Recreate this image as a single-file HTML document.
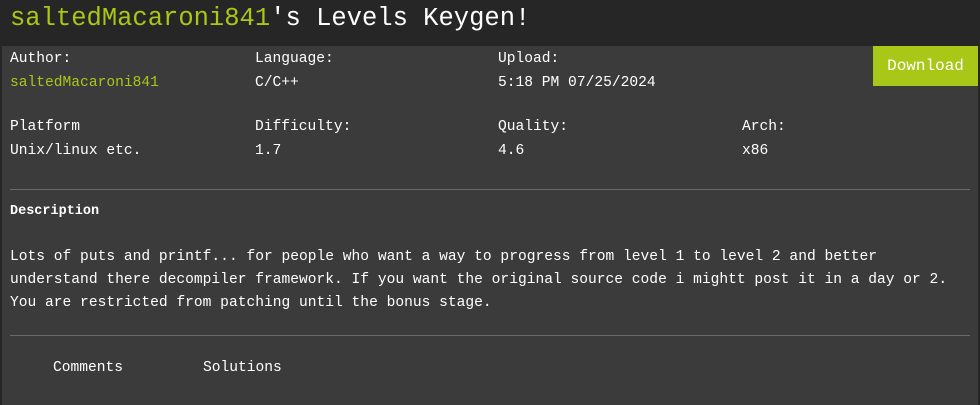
<!DOCTYPE html>
<html><head><meta charset="utf-8"><style>
html,body{margin:0;padding:0;width:980px;height:405px;overflow:hidden;background:#262626;}
body{font-family:"Liberation Mono",monospace;color:#fff;position:relative;}
.a{position:absolute;white-space:pre;font-size:14.6px;line-height:18px;}
.t{position:absolute;left:10px;top:2px;font-size:25.5px;line-height:34px;white-space:pre;}
.g{color:#a9c717;}
#panel{position:absolute;left:2px;top:46px;width:976px;height:359px;background:#3b3b3b;}
#dl{position:absolute;left:873px;top:46px;width:105px;height:40px;background:#a9c717;color:#fff;font-size:16px;line-height:40px;text-align:center;}
.hr{position:absolute;left:10px;width:960px;height:1px;background:#696969;}
</style></head><body>
<div class="t"><span class="g">saltedMacaroni841</span>'s Levels Keygen!</div>
<div id="panel"></div>
<div id="dl">Download</div>
<div class="a" style="left:10px;top:50px">Author:</div>
<div class="a g" style="left:10px;top:74px">saltedMacaroni841</div>
<div class="a" style="left:255px;top:50px">Language:</div>
<div class="a" style="left:255px;top:74px">C/C++</div>
<div class="a" style="left:498px;top:50px">Upload:</div>
<div class="a" style="left:498px;top:74px">5:18 PM 07/25/2024</div>
<div class="a" style="left:10px;top:118px">Platform</div>
<div class="a" style="left:10px;top:142px">Unix/linux etc.</div>
<div class="a" style="left:255px;top:118px">Difficulty:</div>
<div class="a" style="left:255px;top:142px">1.7</div>
<div class="a" style="left:498px;top:118px">Quality:</div>
<div class="a" style="left:498px;top:142px">4.6</div>
<div class="a" style="left:742px;top:118px">Arch:</div>
<div class="a" style="left:742px;top:142px">x86</div>
<div class="hr" style="top:189px"></div>
<div class="a" style="left:10px;top:203px;font-weight:bold;font-size:13.5px">Description</div>
<div class="a" style="left:10px;top:246px;line-height:23px">Lots of puts and printf... for people who want a way to progress from level 1 to level 2 and better
understand there decompiler framework. If you want the original source code i mightt post it in a day or 2.
You are restricted from patching until the bonus stage.</div>
<div class="hr" style="top:335px"></div>
<div class="a" style="left:53px;top:359px">Comments</div>
<div class="a" style="left:203px;top:359px">Solutions</div>
</body></html>
